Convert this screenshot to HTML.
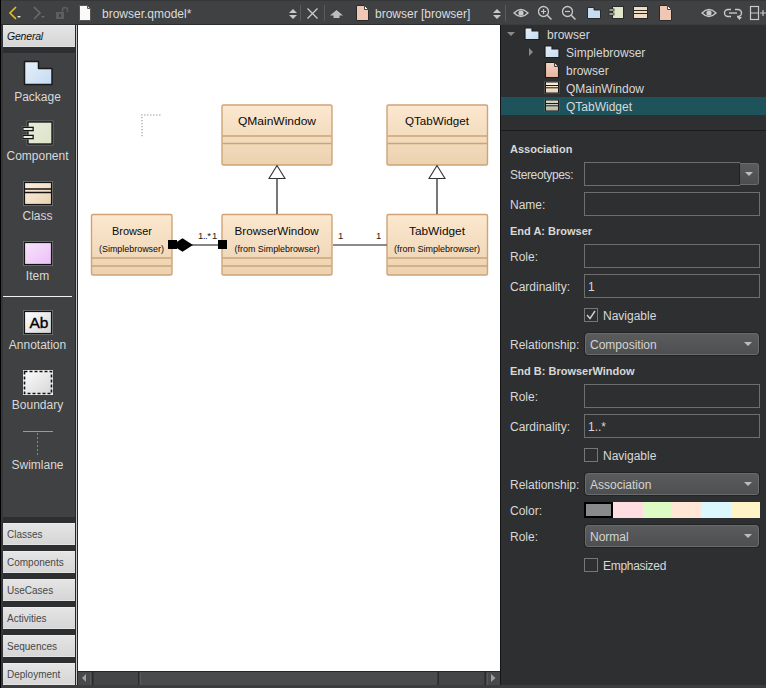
<!DOCTYPE html>
<html><head><meta charset="utf-8">
<style>
*{box-sizing:border-box;margin:0;padding:0}
html,body{width:766px;height:688px;overflow:hidden;background:#3b3c3d;font-family:"Liberation Sans",sans-serif;}
.a{position:absolute}
.t{position:absolute;white-space:nowrap;font-size:12px;line-height:14px;color:#d8d8d8}
#toolbar{left:0;top:0;width:766px;height:25px;background:#404142;border-top:1px solid #363738}
#toolbox{left:0;top:25px;width:75px;height:660px;background:#404142}
.tbtn{position:absolute;left:3px;width:72px;height:22px;background:linear-gradient(#e4e4e4,#d6d6d6);border-top:1px solid #ececec;border-bottom:1px solid #e2e2e2;font-size:10px;line-height:22.5px;color:#484848;padding-left:4px;white-space:nowrap}
.lbl{position:absolute;left:0;width:75px;text-align:center;font-size:12px;line-height:14px;color:#d8d8d8;white-space:nowrap}
#canvas{left:78px;top:25px;width:422px;height:646px;background:#fff}
#right{left:501px;top:25px;width:265px;height:660px;background:#2e2f30}
.inp{position:absolute;left:584px;width:176px;height:24px;border:1px solid #6e6e6e;background:#2e2f30}
.combo{position:absolute;left:585px;width:174px;height:22px;border:1px solid #6a6b6c;border-radius:3px;background:linear-gradient(#5a5b5c,#4e4f50);box-shadow:0 0 0 1px #222324}
.combo .t{left:4px;top:4px;color:#d4d4d4}
.arrow{position:absolute;width:0;height:0;border-left:4px solid transparent;border-right:4px solid transparent;border-top:4px solid #bdbdbd}
.cb{position:absolute;left:584px;width:14px;height:14px;border:1px solid #777}
</style></head><body>

<!-- TOOLBAR -->
<div id="toolbar" class="a"></div>
<div class="a" style="left:0;top:24px;width:500px;height:1px;background:#2c2d2e"></div>
<div class="a" style="left:500px;top:24px;width:266px;height:1px;background:#3b3c3d"></div>
<div class="a" style="left:0;top:0;width:1px;height:688px;background:#111"></div>
<svg class="a" style="left:0;top:0" width="766" height="25">
  <!-- back arrow -->
  <polyline points="16,7 10,13 16,19" fill="none" stroke="#e8c020" stroke-width="1.6"/>
  <polygon points="17,16 21,16 19,18" fill="#e0e0e0"/>
  <!-- forward -->
  <polyline points="34,7 40,13 34,19" fill="none" stroke="#6a6a6a" stroke-width="1.6"/>
  <polygon points="41,16 45,16 43,18" fill="#6a6a6a"/>
  <!-- lock -->
  <rect x="56" y="12" width="8" height="7" fill="#5e5e5e"/>
  <rect x="59" y="14" width="2" height="3" fill="#404142"/>
  <path d="M62.5,12 V10 a2.5,2.5 0 0 1 5,0 V12" fill="none" stroke="#5e5e5e" stroke-width="1.4"/>
  <!-- doc -->
  <path d="M79.5,5.5 H87.5 L90.5,8.5 V20.5 H79.5 Z" fill="#fafafa" stroke="#5a5550" stroke-width="1"/>
  <path d="M87.5,5.5 V8.5 H90.5 Z" fill="#ddd" stroke="#5a5550" stroke-width="1"/>
  <!-- combo arrows -->
  <polygon points="289,13 297,13 293,9" fill="#c8c8c8"/>
  <polygon points="289,15 297,15 293,19" fill="#c8c8c8"/>
  <rect x="300" y="5" width="1" height="16" fill="#5a5b5c"/>
  <!-- close X -->
  <path d="M307.5,8.5 L317.5,18.5 M317.5,8.5 L307.5,18.5" stroke="#cfcfcf" stroke-width="1.2"/>
  <rect x="324" y="5" width="1" height="16" fill="#5a5b5c"/>
  <!-- up arrow -->
  <polygon points="336.5,10 343,15.5 339.5,15.5 339.5,18 333.5,18 333.5,15.5 330,15.5" fill="#bdbdbd"/>
  <!-- pink doc -->
  <path d="M356.5,5.5 H364.5 L368.5,9.5 V20.5 H356.5 Z" fill="#f0c6b4" stroke="#2a2a2a" stroke-width="1"/>
  <path d="M364.5,5.5 V9.5 H368.5 Z" fill="#fff" stroke="#444" stroke-width="1"/>
  <!-- combo arrows 2 -->
  <polygon points="493,13 501,13 497,9" fill="#c8c8c8"/>
  <polygon points="493,15 501,15 497,19" fill="#c8c8c8"/>
  <rect x="505" y="5" width="1" height="16" fill="#5a5b5c"/>
  <!-- eye -->
  <path d="M514,13 Q521,6 528,13 Q521,20 514,13 Z" fill="none" stroke="#c8c8c8" stroke-width="1.3"/>
  <circle cx="521" cy="13" r="2.6" fill="#c8c8c8"/>
  <!-- zoom in -->
  <circle cx="543.5" cy="11.5" r="5" fill="none" stroke="#c8c8c8" stroke-width="1.3"/>
  <path d="M547,15 L551.5,19.5" stroke="#c8c8c8" stroke-width="1.5"/>
  <path d="M541,11.5 H546 M543.5,9 V14" stroke="#c8c8c8" stroke-width="1.2"/>
  <!-- zoom out -->
  <circle cx="567.5" cy="11.5" r="5" fill="none" stroke="#c8c8c8" stroke-width="1.3"/>
  <path d="M571,15 L575.5,19.5" stroke="#c8c8c8" stroke-width="1.5"/>
  <path d="M565,11.5 H570" stroke="#c8c8c8" stroke-width="1.2"/>
  <!-- folder -->
  <path d="M587.5,7.5 H594 V10 H600.5 V18.5 H587.5 Z" fill="#c6dcf0" stroke="#2a2a2a" stroke-width="1"/>
  <!-- component -->
  <rect x="612.5" y="6.5" width="11" height="12" fill="#e0e6cc" stroke="#2a2a2a"/>
  <rect x="609" y="9" width="5" height="2" fill="#e0e6cc" stroke="#2a2a2a" stroke-width="0.8"/>
  <rect x="609" y="13" width="5" height="2" fill="#e0e6cc" stroke="#2a2a2a" stroke-width="0.8"/>
  <!-- class -->
  <rect x="633.5" y="6.5" width="14" height="12" fill="#f0dcc0" stroke="#2a2a2a"/>
  <path d="M634,10.5 H647 M634,13.5 H647" stroke="#2a2a2a" stroke-width="1"/>
  <!-- pink doc -->
  <path d="M659.5,5.5 H667.5 L671.5,9.5 V20.5 H659.5 Z" fill="#f0c6b4" stroke="#2a2a2a" stroke-width="1"/>
  <path d="M667.5,5.5 V9.5 H671.5 Z" fill="#fff" stroke="#444" stroke-width="1"/>
  <!-- eye 2 -->
  <path d="M702,13 Q709,6 716,13 Q709,20 702,13 Z" fill="none" stroke="#c8c8c8" stroke-width="1.3"/>
  <circle cx="709" cy="13" r="2.6" fill="#c8c8c8"/>
  <!-- link -->
  <path d="M731,9.5 H728 a3.5,3.5 0 0 0 0,7 H731 M735,9.5 H738 a3.5,3.5 0 0 1 0,7 H737" fill="none" stroke="#c8c8c8" stroke-width="1.4"/>
  <path d="M729,13 H737" stroke="#c8c8c8" stroke-width="1.4"/>
  <polygon points="737,17 742,17 739.5,20" fill="#c8c8c8"/>
  <!-- layout plus -->
  <rect x="750.5" y="6.5" width="8" height="13" fill="none" stroke="#c8c8c8" stroke-width="1.2"/>
  <path d="M750.5,13 H758.5 M760,13 H766 M763,10 V16" stroke="#c8c8c8" stroke-width="1.2"/>
</svg>
<div class="t" style="left:102px;top:7px;color:#dcdcdc">browser.qmodel*</div>
<div class="t" style="left:375px;top:7px;color:#dcdcdc">browser [browser]</div>

<!-- TOOLBOX -->
<div id="toolbox" class="a"></div>
<div class="a" style="left:1px;top:25px;width:2px;height:660px;background:#363738"></div>
<div class="a" style="left:3px;top:47px;width:72px;height:6px;background:#2e2f30"></div>
<div class="tbtn" style="top:25px;font-size:10.5px;line-height:21px;font-style:italic;color:#101010;padding-left:4px;letter-spacing:-0.2px">General</div>
<div class="a" style="left:75px;top:25px;width:1px;height:660px;background:#262728"></div>
<div class="a" style="left:76px;top:25px;width:1px;height:660px;background:#c8c8c8"></div>
<div class="a" style="left:77px;top:25px;width:1px;height:660px;background:#262728"></div>

<svg class="a" style="left:0;top:0" width="75" height="520">
  <defs>
    <linearGradient id="gpk" x1="0" y1="0" x2="1" y2="1"><stop offset="0" stop-color="#e6f0fa"/><stop offset="1" stop-color="#c4dcf2"/></linearGradient>
    <linearGradient id="gcm" x1="0" y1="0" x2="1" y2="1"><stop offset="0" stop-color="#e8ecdc"/><stop offset="1" stop-color="#dde4c8"/></linearGradient>
    <linearGradient id="gcl" x1="0" y1="0" x2="1" y2="1"><stop offset="0" stop-color="#fcf0e0"/><stop offset="1" stop-color="#ead2b2"/></linearGradient>
    <linearGradient id="git" x1="0" y1="0" x2="1" y2="1"><stop offset="0" stop-color="#f8e4fa"/><stop offset="1" stop-color="#ecbef8"/></linearGradient>
    <linearGradient id="gan" x1="0" y1="0" x2="1" y2="1"><stop offset="0" stop-color="#ffffff"/><stop offset="1" stop-color="#d4d4d4"/></linearGradient>
  </defs>
  <!-- package -->
  <path d="M24.5,61.5 H38.5 V68.5 H52 V84.5 H24.5 Z" fill="url(#gpk)" stroke="#1a1a1a" stroke-width="1.5" stroke-linejoin="round"/>
  <!-- component -->
  <rect x="27" y="121" width="26" height="24" fill="none" stroke="#707070" stroke-width="1"/>
  <rect x="28" y="122" width="24" height="22" fill="url(#gcm)" stroke="#141414" stroke-width="1.3"/>
  <rect x="22" y="126.5" width="12" height="5" fill="#707070"/>
  <rect x="22" y="134.5" width="12" height="5" fill="#707070"/>
  <rect x="23" y="127.5" width="10" height="3" fill="#e6eada" stroke="#141414" stroke-width="1"/>
  <rect x="23" y="135.5" width="10" height="3" fill="#e6eada" stroke="#141414" stroke-width="1"/>
  <!-- class -->
  <rect x="23.5" y="181.5" width="29" height="24" fill="none" stroke="#707070" stroke-width="1"/>
  <rect x="24.5" y="182.5" width="27" height="22" fill="url(#gcl)" stroke="#141414" stroke-width="1.2"/>
  <path d="M25,189 H51 M25,192.5 H51" stroke="#141414" stroke-width="1.5"/>
  <!-- item -->
  <rect x="23.5" y="241.5" width="29" height="24" fill="none" stroke="#707070" stroke-width="1"/>
  <rect x="24.5" y="242.5" width="27" height="22" fill="url(#git)" stroke="#141414" stroke-width="1.2"/>
  <!-- separator -->
  <rect x="3" y="296" width="69" height="1" fill="#f2f2f2"/>
  <!-- annotation -->
  <rect x="23.5" y="310.5" width="29" height="24" fill="none" stroke="#707070" stroke-width="1"/>
  <rect x="24.5" y="311.5" width="27" height="22" fill="url(#gan)" stroke="#141414" stroke-width="1.2"/>
  <text x="39" y="327.8" text-anchor="middle" font-family="Liberation Sans" font-size="15.5" fill="#000" stroke="#000" stroke-width="0.35">Ab</text>
  <!-- boundary -->
  <rect x="23" y="370" width="30" height="25" fill="url(#gan)"/>
  <rect x="23.5" y="370.5" width="29" height="24" fill="none" stroke="#f0f0f0" stroke-width="1"/>
  <rect x="24.5" y="371.5" width="27" height="22" fill="none" stroke="#141414" stroke-width="1.6" stroke-dasharray="3,2"/>
  <!-- swimlane -->
  <rect x="23" y="431" width="30" height="1" fill="#9a9a9a"/>
  <path d="M37.5,433 V456" stroke="#8a8a8a" stroke-width="1" stroke-dasharray="2,2"/>
</svg>
<div class="lbl" style="top:90px">Package</div>
<div class="lbl" style="top:149px">Component</div>
<div class="lbl" style="top:209px">Class</div>
<div class="lbl" style="top:269px">Item</div>
<div class="lbl" style="top:338px">Annotation</div>
<div class="lbl" style="top:398px">Boundary</div>
<div class="lbl" style="top:458px">Swimlane</div>

<div class="a" style="left:3px;top:517px;width:72px;height:6px;background:#2e2f30"></div>
<div class="tbtn" style="top:523px">Classes</div>
<div class="a" style="left:3px;top:545px;width:72px;height:6px;background:#2e2f30"></div>
<div class="tbtn" style="top:551px">Components</div>
<div class="a" style="left:3px;top:573px;width:72px;height:6px;background:#2e2f30"></div>
<div class="tbtn" style="top:579px">UseCases</div>
<div class="a" style="left:3px;top:601px;width:72px;height:6px;background:#2e2f30"></div>
<div class="tbtn" style="top:607px">Activities</div>
<div class="a" style="left:3px;top:629px;width:72px;height:6px;background:#2e2f30"></div>
<div class="tbtn" style="top:635px">Sequences</div>
<div class="a" style="left:3px;top:657px;width:72px;height:6px;background:#2e2f30"></div>
<div class="tbtn" style="top:663px">Deployment</div>

<!-- CANVAS -->
<div id="canvas" class="a"></div>
<svg class="a" style="left:0;top:0" width="500" height="688">
  <defs>
    <linearGradient id="cg" x1="0" y1="0" x2="0" y2="1">
      <stop offset="0" stop-color="#fce8d0"/><stop offset="1" stop-color="#ebd2b0"/>
    </linearGradient>
  </defs>
  <!-- dotted corner -->
  <rect x="141" y="114" width="1.5" height="2" fill="#cfcfcf"/><rect x="144" y="114" width="1.5" height="2" fill="#cfcfcf"/><rect x="147" y="114" width="1.5" height="2" fill="#cfcfcf"/><rect x="150" y="114" width="1.5" height="2" fill="#cfcfcf"/><rect x="153" y="114" width="1.5" height="2" fill="#cfcfcf"/><rect x="156" y="114" width="1.5" height="2" fill="#cfcfcf"/><rect x="159" y="114" width="1.5" height="2" fill="#cfcfcf"/><rect x="141" y="117" width="2" height="1.2" fill="#c4c4c4"/><rect x="141" y="120" width="2" height="1.2" fill="#c4c4c4"/><rect x="141" y="123" width="2" height="1.2" fill="#c4c4c4"/><rect x="141" y="126" width="2" height="1.2" fill="#c4c4c4"/><rect x="141" y="129" width="2" height="1.2" fill="#c4c4c4"/><rect x="141" y="132" width="2" height="1.2" fill="#c4c4c4"/><rect x="141" y="135" width="2" height="1.2" fill="#c4c4c4"/>
  <!-- QMainWindow -->
  <g stroke="#cfa376" stroke-width="1.4">
  <rect x="222" y="105" width="110" height="60" rx="1.5" fill="url(#cg)"/>
  <path d="M222.5,136 H331.5 M222.5,143.5 H331.5"/>
  <rect x="387" y="105" width="100.5" height="60" rx="1.5" fill="url(#cg)"/>
  <path d="M387.5,136 H487 M387.5,143.5 H487"/>
  <rect x="91.5" y="214.5" width="80.5" height="60.5" rx="1.5" fill="url(#cg)"/>
  <path d="M92,258 H171.5 M92,266 H171.5"/>
  <rect x="222" y="214.5" width="110" height="60.5" rx="1.5" fill="url(#cg)"/>
  <path d="M222.5,258 H331.5 M222.5,266 H331.5"/>
  <rect x="387" y="214.5" width="100.5" height="60.5" rx="1.5" fill="url(#cg)"/>
  <path d="M387.5,258 H487 M387.5,266 H487"/>
  </g>
  <!-- inheritance lines -->
  <path d="M277,178 V214" stroke="#555" stroke-width="1.6"/>
  <polygon points="277,165.5 285,178.5 269,178.5" fill="#fff" stroke="#333" stroke-width="1.1"/>
  <path d="M437,178 V214" stroke="#555" stroke-width="1.6"/>
  <polygon points="437,165.5 445,178.5 429,178.5" fill="#fff" stroke="#333" stroke-width="1.1"/>
  <!-- composition -->
  <path d="M192,245 H218" stroke="#666" stroke-width="1.6"/>
  <rect x="168" y="240" width="9" height="9" fill="#000"/>
  <polygon points="172,245 182.5,238.3 193,245 182.5,251.7" fill="#000"/>
  <rect x="218" y="240" width="9" height="9" fill="#000"/>
  <!-- association -->
  <path d="M333,245 H387" stroke="#666" stroke-width="1.6"/>
  <text font-family="Liberation Sans" font-size="9.5" fill="#1a1a1a">
    <tspan x="198" y="239" letter-spacing="-0.4">1..*</tspan><tspan x="212" y="239">1</tspan>
    <tspan x="338" y="239">1</tspan><tspan x="376" y="239">1</tspan>
  </text>
  <!-- class texts -->
  <g font-family="Liberation Sans" fill="#0a0a0a" lengthAdjust="spacingAndGlyphs">
    <text x="238" y="125" font-size="11" textLength="78" lengthAdjust="spacingAndGlyphs">QMainWindow</text>
    <text x="405" y="125" font-size="11" textLength="64" lengthAdjust="spacingAndGlyphs">QTabWidget</text>
    <text x="112" y="235" font-size="11" textLength="40" lengthAdjust="spacingAndGlyphs">Browser</text>
    <text x="99" y="251.5" font-size="9.5" textLength="65" lengthAdjust="spacingAndGlyphs">(Simplebrowser)</text>
    <text x="234.6" y="235" font-size="11" textLength="84" lengthAdjust="spacingAndGlyphs">BrowserWindow</text>
    <text x="234.6" y="251.5" font-size="9.5" textLength="85" lengthAdjust="spacingAndGlyphs">(from Simplebrowser)</text>
    <text x="409" y="235" font-size="11" textLength="56" lengthAdjust="spacingAndGlyphs">TabWidget</text>
    <text x="394" y="251.5" font-size="9.5" textLength="86" lengthAdjust="spacingAndGlyphs">(from Simplebrowser)</text>
  </g>
  <!-- scrollbar -->
  <rect x="78" y="671" width="422" height="1" fill="#262728"/>
  <rect x="78" y="672" width="422" height="13" fill="#444547"/>
  <rect x="78" y="672" width="13" height="13" fill="#48494b"/>
  <rect x="90" y="673" width="1" height="12" fill="#58595b"/>
  <rect x="92" y="672" width="1.5" height="13" fill="#2a2b2c"/>
  <polygon points="82,678 86,674 86,682" fill="#a0a0a0"/>
  <rect x="138" y="672" width="1.5" height="13" fill="#2a2b2c"/>
  <rect x="139.5" y="672" width="298" height="13" fill="#4a4b4d"/>
  <rect x="140" y="673" width="1" height="12" fill="#58595b"/>
  <rect x="437.5" y="672" width="1.5" height="13" fill="#2a2b2c"/>
  <rect x="484.5" y="672" width="1.5" height="13" fill="#2a2b2c"/>
  <rect x="486" y="672" width="14" height="13" fill="#48494b"/>
  <rect x="487" y="673" width="1" height="12" fill="#58595b"/>
  <polygon points="495.5,678 491,674 491,682" fill="#a0a0a0"/>
</svg>

<!-- RIGHT PANEL -->
<div class="a" style="left:500px;top:25px;width:1px;height:660px;background:#151515"></div>
<div id="right" class="a"></div>
<!-- tree -->
<div class="a" style="left:501px;top:97px;width:265px;height:18px;background:#1f535c"></div>
<div class="a" style="left:501px;top:130px;width:265px;height:1px;background:#1a1b1c"></div>
<svg class="a" style="left:500px;top:25px" width="266" height="100">
  <defs>
    <linearGradient id="tf" x1="0" y1="0" x2="1" y2="1"><stop offset="0" stop-color="#e6f1fb"/><stop offset="1" stop-color="#c4dbf0"/></linearGradient>
    <linearGradient id="td" x1="0" y1="0" x2="0" y2="1"><stop offset="0" stop-color="#f4d2c4"/><stop offset="1" stop-color="#e8b4a0"/></linearGradient>
    <linearGradient id="tc" x1="0" y1="0" x2="0" y2="1"><stop offset="0" stop-color="#fcf0e0"/><stop offset="1" stop-color="#ecd4b6"/></linearGradient>
    <linearGradient id="ts" x1="0" y1="0" x2="0" y2="1"><stop offset="0" stop-color="#d4d6c8"/><stop offset="1" stop-color="#b8bca8"/></linearGradient>
  </defs>
  <polygon points="7,7 15,7 11,11" fill="#8a8a8a"/>
  <path d="M25,3 H32 V6 H39 V14.5 H25 Z" fill="url(#tf)" stroke="#1e1e1e" stroke-width="1.2" stroke-linejoin="round"/>
  <polygon points="29,23 33,27 29,31" fill="#8a8a8a"/>
  <path d="M45,21 H52 V24 H59 V32.5 H45 Z" fill="url(#tf)" stroke="#1e1e1e" stroke-width="1.2" stroke-linejoin="round"/>
  <path d="M45.5,37.5 H54.5 L58.5,41.5 V52.5 H45.5 Z" fill="url(#td)" stroke="#1a1a1a" stroke-width="1.1"/>
  <path d="M54.5,37.5 V41.5 H58.5 Z" fill="#d8d8d8" stroke="#333" stroke-width="0.9"/>
  <rect x="44.5" y="56" width="15" height="13" fill="#6a6a6a"/>
  <rect x="45.5" y="57" width="13" height="11" fill="url(#tc)" stroke="#1a1a1a" stroke-width="1"/>
  <path d="M46,60.5 H58 M46,62.8 H58" stroke="#1a1a1a" stroke-width="1"/>
  <rect x="44.5" y="74" width="15" height="13" fill="#5a6a6a"/>
  <rect x="45.5" y="75" width="13" height="11" fill="url(#ts)" stroke="#1a1a1a" stroke-width="1"/>
  <path d="M46,78.5 H58 M46,80.8 H58" stroke="#1a1a1a" stroke-width="1"/>
</svg>
<div class="t" style="left:547px;top:28px">browser</div>
<div class="t" style="left:566px;top:46px">Simplebrowser</div>
<div class="t" style="left:566px;top:64px">browser</div>
<div class="t" style="left:566px;top:82px">QMainWindow</div>
<div class="t" style="left:566px;top:100px">QTabWidget</div>

<!-- properties -->
<div class="t" style="left:510px;top:142px;font-weight:bold;font-size:11px">Association</div>
<div class="t" style="left:510px;top:168px;letter-spacing:-0.35px">Stereotypes:</div>
<div class="inp" style="top:162px;width:156px;border-right:none"></div>
<div class="a" style="left:739px;top:163px;width:20px;height:22px;background:linear-gradient(#5a5b5c,#4c4d4e);border:1px solid #6a6b6c;border-left:1px solid #1e1f20;border-radius:0 3px 3px 0"></div>
<div class="arrow" style="left:745px;top:172px"></div>
<div class="t" style="left:510px;top:198px">Name:</div>
<div class="inp" style="top:192px"></div>
<div class="t" style="left:510px;top:224px;font-weight:bold;font-size:11px">End A: Browser</div>
<div class="t" style="left:510px;top:250px">Role:</div>
<div class="inp" style="top:244px"></div>
<div class="t" style="left:510px;top:280px">Cardinality:</div>
<div class="inp" style="top:274px"></div>
<div class="t" style="left:588px;top:280px">1</div>
<div class="cb" style="top:308px"></div>
<svg class="a" style="left:584px;top:308px" width="14" height="14"><polyline points="3,7 6,10.5 11,3" fill="none" stroke="#d0d0d0" stroke-width="1.4"/></svg>
<div class="t" style="left:603px;top:309px">Navigable</div>
<div class="t" style="left:510px;top:338px">Relationship:</div>
<div class="combo" style="top:333px"><div class="t">Composition</div><div class="arrow" style="left:158px;top:8px"></div></div>
<div class="t" style="left:510px;top:364px;font-weight:bold;font-size:11px">End B: BrowserWindow</div>
<div class="t" style="left:510px;top:390px">Role:</div>
<div class="inp" style="top:384px"></div>
<div class="t" style="left:510px;top:420px">Cardinality:</div>
<div class="inp" style="top:414px"></div>
<div class="t" style="left:588px;top:420px">1..*</div>
<div class="cb" style="top:448px"></div>
<div class="t" style="left:603px;top:449px">Navigable</div>
<div class="t" style="left:510px;top:478px">Relationship:</div>
<div class="combo" style="top:473px"><div class="t">Association</div><div class="arrow" style="left:158px;top:8px"></div></div>
<div class="t" style="left:510px;top:504px">Color:</div>
<div class="a" style="left:584px;top:502px;width:29px;height:16px;background:#8a8a8a;border:2px solid #000"></div>
<div class="a" style="left:613px;top:502px;width:30px;height:16px;background:#ffdde0"></div>
<div class="a" style="left:643px;top:502px;width:29px;height:16px;background:#ddfcc3"></div>
<div class="a" style="left:672px;top:502px;width:29px;height:16px;background:#ffe6d5"></div>
<div class="a" style="left:701px;top:502px;width:30px;height:16px;background:#dcf8ff"></div>
<div class="a" style="left:731px;top:502px;width:29px;height:16px;background:#fff4c6"></div>
<div class="t" style="left:510px;top:530px">Role:</div>
<div class="combo" style="top:525px"><div class="t">Normal</div><div class="arrow" style="left:158px;top:8px"></div></div>
<div class="cb" style="top:558px"></div>
<div class="t" style="left:603px;top:559px;letter-spacing:-0.3px">Emphasized</div>

<div class="a" style="left:0;top:0;width:1px;height:688px;background:#000"></div>
</body></html>
